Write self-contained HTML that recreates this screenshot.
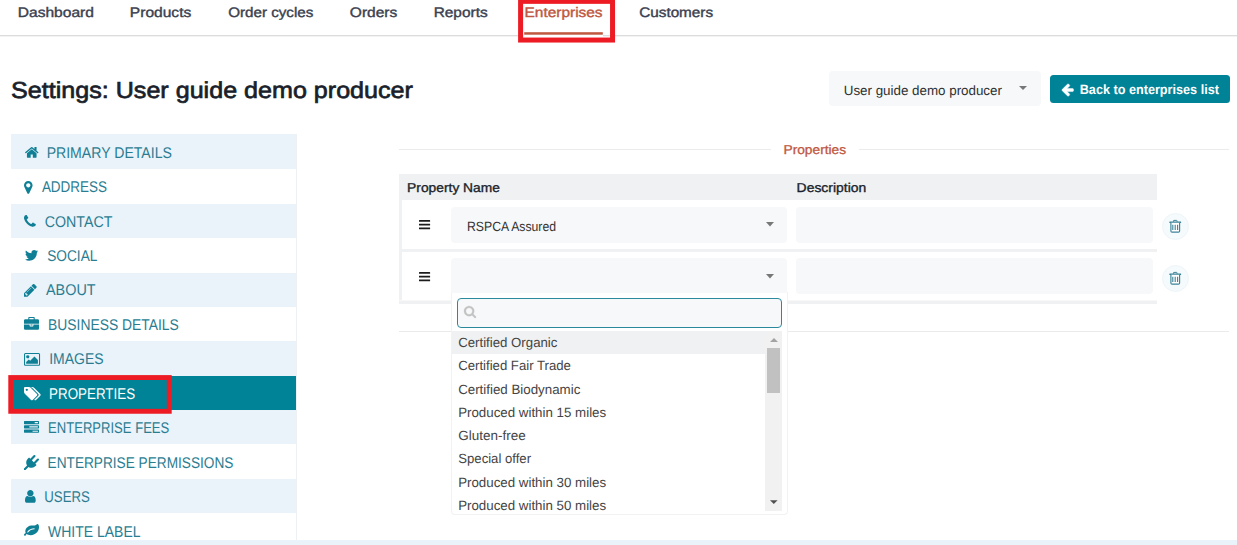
<!DOCTYPE html>
<html lang="en">
<head>
<meta charset="utf-8">
<title>Settings: User guide demo producer</title>
<style>
html,body{margin:0;padding:0;background:#fff}
body{width:1237px;height:545px;position:relative;overflow:hidden;font-family:"Liberation Sans",sans-serif}
.t{position:absolute;white-space:pre;transform-origin:0 0}
.a{position:absolute}
.mi{position:absolute;left:11px;width:285px;height:34.45px}
.odd{background:#eaf2fa}
.ic{position:absolute;overflow:visible}
.fld{position:absolute;background:#f7f8f9;border-radius:4px}
</style>
</head>
<body>
<!-- top navigation -->
<div class="a" style="left:0;top:35px;width:1237px;height:1px;background:#dcdcdc"></div>
<div class="a" style="left:0;top:36px;width:1237px;height:1px;background:#f3f3f3"></div>
<svg class="ic" style="left:520px;top:30px" width="90" height="8" viewBox="520 30 90 8"><rect x="523" y="34.7" width="80" height="2.5" fill="#fff"/><rect x="524.2" y="32.2" width="78.6" height="2.5" fill="#c0573f"/></svg>
<svg class="ic" style="left:510px;top:0" width="120" height="50" viewBox="510 0 120 50"><rect x="520.6" y="1.35" width="91.95" height="38.7" fill="none" stroke="#ed1c24" stroke-width="5"/></svg>

<!-- header controls -->
<div class="a" style="left:829px;top:71px;width:212px;height:35px;background:#f7f8f9;border-radius:4px"></div>
<svg class="ic" style="left:1019px;top:86px" width="8" height="4" viewBox="0 0 8 4"><path d="M0 0h8L4 4z" fill="#777"/></svg>
<div class="a" style="left:1050px;top:75px;width:180px;height:28px;background:#008397;border-radius:3.5px"></div>
<svg class="ic" style="left:1061.80px;top:83.76px" width="11.50" height="12.17" viewBox="192.0 181.0 1472.0 1558.0"><path d="M1664 896v128q0 53-32.500 90.500t-84.500 37.500h-704l293 294q38 36 38 90t-38 90l-75 76q-37 37-90 37-52 0-91-37l-651-652q-37-37-37-90 0-52 37-91l651-650q38-38 91-38 52 0 90 38l75 74q38 38 38 91t-38 91l-293 293h704q52 0 84.500 37.500t32.500 90.500z" fill="#ffffff" stroke="#ffffff" stroke-width="60" stroke-linejoin="round"/></svg>

<!-- side menu -->
<div id="menu">
<div class="mi odd" style="top:134px;height:35px"></div>
<div class="mi" style="top:169px;height:35px"></div>
<div class="mi odd" style="top:204px;height:34px"></div>
<div class="mi" style="top:238px;height:35px"></div>
<div class="mi odd" style="top:273px;height:34px"></div>
<div class="mi" style="top:307px;height:34px"></div>
<div class="mi odd" style="top:341px;height:35px"></div>
<div class="mi" style="top:376px;height:34px;background:#008397"></div>
<div class="mi odd" style="top:410px;height:34px"></div>
<div class="mi" style="top:444px;height:35px"></div>
<div class="mi odd" style="top:479px;height:34px"></div>
<div class="mi" style="top:513px;height:34px"></div>
<div class="a" style="left:296px;top:134px;width:1px;height:406px;background:#eef1f4"></div>
</div>
<svg class="ic" style="left:0;top:370px" width="180" height="50" viewBox="0 370 180 50"><rect x="10.75" y="377.55" width="158.5" height="33.75" fill="none" stroke="#ed1c24" stroke-width="4.9"/></svg>
<svg class="ic" style="left:24.55px;top:146.93px" width="13.50" height="10.74" viewBox="89.9 253.0 1612.2 1283.0"><path d="M1472 992v480q0 26-19 45t-45 19h-384v-384h-256v384h-384q-26 0-45-19t-19-45v-480q0-1 .5-3t.5-3l575-474 575 474q1 2 1 6zm223-69l-62 74q-8 9-21 11h-3q-13 0-21-7l-692-577-692 577q-12 8-24 7-13-2-21-11l-62-74q-8-10-7-23.500t11-21.500l719-599q32-26 76-26t76 26l244 204v-195q0-14 9-23t23-9h192q14 0 23 9t9 23v408l219 182q10 8 11 21.500t-7 23.500z" fill="#0f7f95"/></svg>
<svg class="ic" style="left:24.31px;top:180.97px" width="8.57" height="12.86" viewBox="384.0 128.0 1024.0 1536.0"><path d="M1152 640q0-106-75-181t-181-75-181 75-75 181 75 181 181 75 181-75 75-181zm256 0q0 109-33 179l-364 774q-16 33-47.500 52t-67.500 19-67.500-19-46.500-52l-365-774q-33-70-33-179 0-212 150-362t362-150 362 150 150 362z" fill="#0f7f95"/></svg>
<svg class="ic" style="left:24.46px;top:215.06px" width="11.79" height="11.79" viewBox="192.0 128.0 1408.0 1408.0"><path d="M1600 1240q0 27-10 70.500t-21 68.500q-21 50-122 106-94 51-186 51-27 0-53-3.500t-57.500-12.500-47-14.500-55.500-20.500-49-18q-98-35-175-83-127-79-264-216t-216-264q-48-77-83-175-3-9-18-49t-20.500-55.500-14.500-47-12.500-57.500-3.500-53q0-92 51-186 56-101 106-122 25-11 68.500-21t70.500-10q14 0 21 3 18 6 53 76 11 19 30 54t35 63.500 31 53.500q3 4 17.500 25t21.500 35.500 7 28.500q0 20-28.500 50t-62 55-62 53-28.500 46q0 9 5 22.500t8.500 20.500 14 24 11.500 19q76 137 174 235t235 174q2 1 19 11.500t24 14 20.500 8.500 22.500 5q18 0 46-28.500t53-62 55-62 50-28.500q14 0 28.500 7t35.500 21.500 25 17.500q25 15 53.500 31t63.500 35 54 30q70 35 76 53 3 7 3 21z" fill="#0f7f95"/></svg>
<svg class="ic" style="left:24.55px;top:249.99px" width="13.19" height="10.71" viewBox="44.0 256.0 1576.0 1280.0"><path d="M1620 408q-67 98-162 167 1 14 1 42 0 130-38 259.500t-115.500 248.500-184.500 210.500-258 146-323 54.500q-271 0-496-145 35 4 78 4 225 0 401-138-105-2-188-64.500t-114-159.500q33 5 61 5 43 0 85-11-112-23-185.500-111.500t-73.500-205.500v-4q68 38 146 41-66-44-105-115t-39-154q0-88 44-163 121 149 294.500 238.500t371.500 99.500q-8-38-8-74 0-134 94.500-228.500t228.500-94.500q140 0 236 102 109-21 205-78-37 115-142 178 93-10 186-50z" fill="#0f7f95"/></svg>
<svg class="ic" style="left:24.31px;top:284.21px" width="12.68" height="12.68" viewBox="128.0 149.0 1515.0 1515.0"><path d="M491 1536l91-91-235-235-91 91v107h128v128h107zm523-928q0-22-22-22-10 0-17 7l-542 542q-7 7-7 17 0 22 22 22 10 0 17-7l542-542q7-7 7-17zm-54-192l416 416-832 832h-416v-416zm683 96q0 53-37 90l-166 166-416-416 166-165q36-38 90-38 53 0 91 38l235 234q37 39 37 91z" fill="#0f7f95"/></svg>
<svg class="ic" style="left:24.35px;top:317.07px" width="15.00" height="12.86" viewBox="0.0 0.0 1792.0 1536.0"><path d="M640 256h512v-128h-512v128zm1152 640v480q0 66-47 113t-113 47h-1472q-66 0-113-47t-47-113v-480h672v160q0 26 19 45t45 19h320q26 0 45-19t19-45v-160h672zm-768 0v128h-256v-128h256zm768-480v384h-1792v-384q0-66 47-113t113-47h352v-160q0-40 28-68t68-28h576q40 0 68 28t28 68v160h352q66 0 113 47t47 113z" fill="#0f7f95"/></svg>
<svg class="ic" style="left:24.21px;top:352.92px" width="16.07" height="12.86" viewBox="-64.0 128.0 1920.0 1536.0"><path d="M576 576q0 80-56 136t-136 56-136-56-56-136 56-136 136-56 136 56 56 136zm1024 384v448h-1408v-192l320-320 160 160 512-512zm96-704h-1600q-13 0-22.500 9.500t-9.500 22.500v1216q0 13 9.500 22.500t22.500 9.500h1600q13 0 22.500-9.500t9.500-22.500v-1216q0-13-9.500-22.500t-22.500-9.500zm160 32v1216q0 66-47 113t-113 47h-1600q-66 0-113-47t-47-113v-1216q0-66 47-113t113-47h1600q66 0 113 47t47 113z" fill="#0f7f95"/></svg>
<svg class="ic" style="left:24.08px;top:386.71px" width="16.64" height="13.27" viewBox="-64.0 128.0 1899.0 1515.0"><path d="M384 448q0-53-37.500-90.500t-90.500-37.500-90.500 37.500-37.500 90.500 37.500 90.500 90.500 37.500 90.500-37.500 37.500-90.500zm1067 576q0 53-37 90l-491 492q-39 37-91 37-53 0-90-37l-715-716q-38-37-64.500-101t-26.500-117v-416q0-52 38-90t90-38h416q53 0 117 26.500t102 64.500l715 714q37 39 37 91zm384 0q0 53-37 90l-491 492q-39 37-91 37-36 0-59-14t-53-45l470-470q37-37 37-90 0-52-37-91l-715-714q-38-38-102-64.500t-117-26.500h224q53 0 117 26.500t102 64.500l715 714q37 39 37 91z" fill="#ffffff"/></svg>
<svg class="ic" style="left:24.30px;top:421.06px" width="15.00" height="11.79" viewBox="0.0 128.0 1792.0 1408.0"><path d="M1024 1408h640v-128h-640v128zm-384-512h1024v-128h-1024v128zm640-512h384v-128h-384v128zm512 832v256q0 26-19 45t-45 19h-1664q-26 0-45-19t-19-45v-256q0-26 19-45t45-19h1664q26 0 45 19t19 45zm0-512v256q0 26-19 45t-45 19h-1664q-26 0-45-19t-19-45v-256q0-26 19-45t45-19h1664q26 0 45 19t19 45zm0-512v256q0 26-19 45t-45 19h-1664q-26 0-45-19t-19-45v-256q0-26 19-45t45-19h1664q26 0 45 19t19 45z" fill="#0f7f95"/></svg>
<svg class="ic" style="left:24.35px;top:455.15px" width="15.00" height="15.00" viewBox="0.0 0.0 1792.0 1792.0"><path d="M1755 453q37 38 37 90.500t-37 90.500l-401 400 150 150-160 160q-163 163-389.500 186.500t-411.500-100.500l-362 362h-181v-181l362-362q-124-185-100.500-411.500t186.500-389.500l160-160 150 150 400-401q38-37 91-37t90 37 37 90.500-37 90.500l-400 401 234 234 401-400q38-37 91-37t90 37z" fill="#0f7f95"/></svg>
<svg class="ic" style="left:24.89px;top:489.92px" width="10.71" height="12.86" viewBox="256.0 128.0 1280.0 1536.0"><path d="M1536 1399q0 109-62.500 187t-150.500 78h-854q-88 0-150.500-78t-62.500-187q0-85 8.500-160.500t31.500-152 58.500-131 94-89 134.500-34.500q131 128 313 128t313-128q76 0 134.500 34.500t94 89 58.500 131 31.500 152 8.500 160.500zm-256-887q0 159-112.500 271.500t-271.500 112.500-271.500-112.500-112.500-271.500 112.500-271.500 271.500-112.500 271.500 112.500 112.500 271.500z" fill="#0f7f95"/></svg>
<svg class="ic" style="left:24.45px;top:523.91px" width="15.00" height="11.79" viewBox="0.0 128.0 1792.0 1408.0"><path d="M1280 704q0-26-19-45t-45-19q-172 0-318 49.500t-259.500 134-235.500 219.500q-19 21-19 45 0 26 19 45t45 19q24 0 45-19 27-24 74-71t67-66q137-124 268.500-176t313.500-52q26 0 45-19t19-45zm512-198q0 95-20 193-46 224-184.500 383t-357.500 268q-214 108-438 108-148 0-286-47-15-5-88-42t-96-37q-16 0-39.500 32t-45 70-52.500 70-60 32q-43 0-63.500-17.500t-45.500-59.500q-2-4-6-11t-5.500-10-3-9.500-1.500-13.500q0-35 31-73.500t68-65.500 68-56 31-48q0-4-14-38t-16-44q-9-51-9-104 0-115 43.500-220t119-184.500 170.500-139 204-95.500q55-18 145-25.500t179.500-9 178.500-6 163.500-24 113.500-56.500l29.500-29.500 29.500-28 27-20 36.500-16 43.500-4.500q39 0 70.500 46t47.500 112 24 124 8 96z" fill="#0f7f95"/></svg>

<!-- fieldset -->
<div class="a" style="left:399px;top:149px;width:830px;height:1px;background:#ebebeb"></div>
<div class="a" style="left:771px;top:140px;width:88px;height:20px;background:#fff"></div>
<div class="a" style="left:399px;top:331px;width:830px;height:1px;background:#ebebeb"></div>

<!-- table -->
<div class="a" style="left:399px;top:174px;width:758px;height:26px;background:#f0f1f2"></div>
<div class="a" style="left:399px;top:200px;width:3px;height:104px;background:#f0f1f2"></div>
<div class="a" style="left:399px;top:249px;width:758px;height:3px;background:#f0f1f2"></div>
<div class="a" style="left:399px;top:300px;width:758px;height:1px;background:#f8f8f9"></div><div class="a" style="left:399px;top:301px;width:758px;height:3px;background:#f0f1f2"></div>
<div class="fld" style="left:451px;top:207px;width:336px;height:35.5px"></div>
<div class="fld" style="left:796px;top:207px;width:357px;height:35.5px"></div>
<div class="fld" style="left:796px;top:258px;width:357px;height:35.5px"></div>
<!-- drag handles -->
<svg class="ic" style="left:419.43px;top:219.76px" width="11.14" height="9.29" viewBox="128.0 256.0 1536.0 1280.0"><path d="M1664 1344v128q0 26-19 45t-45 19h-1408q-26 0-45-19t-19-45v-128q0-26 19-45t45-19h1408q26 0 45 19t19 45zm0-512v128q0 26-19 45t-45 19h-1408q-26 0-45-19t-19-45v-128q0-26 19-45t45-19h1408q26 0 45 19t19 45zm0-512v128q0 26-19 45t-45 19h-1408q-26 0-45-19t-19-45v-128q0-26 19-45t45-19h1408q26 0 45 19t19 45z" fill="#1c1c1c"/></svg>
<svg class="ic" style="left:419.43px;top:271.76px" width="11.14" height="9.29" viewBox="128.0 256.0 1536.0 1280.0"><path d="M1664 1344v128q0 26-19 45t-45 19h-1408q-26 0-45-19t-19-45v-128q0-26 19-45t45-19h1408q26 0 45 19t19 45zm0-512v128q0 26-19 45t-45 19h-1408q-26 0-45-19t-19-45v-128q0-26 19-45t45-19h1408q26 0 45 19t19 45zm0-512v128q0 26-19 45t-45 19h-1408q-26 0-45-19t-19-45v-128q0-26 19-45t45-19h1408q26 0 45 19t19 45z" fill="#1c1c1c"/></svg>
<svg class="ic" style="left:766.3px;top:221.8px" width="8" height="4.4" viewBox="0 0 8 4.4"><path d="M0 0h8L4 4.4z" fill="#777"/></svg>
<!-- delete buttons -->
<div class="a" style="left:1162.2px;top:212.8px;width:25px;height:25px;border-radius:50%;background:#f5fafc;border:1px solid #eef5f8;box-sizing:content-box"></div>
<div class="a" style="left:1162.2px;top:264.8px;width:25px;height:25px;border-radius:50%;background:#f5fafc;border:1px solid #eef5f8;box-sizing:content-box"></div>
<svg class="ic" style="left:1165px;top:215px" width="22" height="22" viewBox="1165 215 22 22"><path d="M1173.4 221.8V221Q1173.4 220.4 1174 220.4H1176.5Q1177.1 220.4 1177.1 221V221.8" fill="none" stroke="#3d8398" stroke-width="1"/><rect x="1169.3" y="221.6" width="11.9" height="1.3" rx="0.4" fill="#3d8398"/><path d="M1170.9 222.7V231Q1170.9 232.15 1172.05 232.15H1178.45Q1179.6 232.15 1179.6 231V222.7" fill="#fff" stroke="#3d8398" stroke-width="1.15"/><path d="M1172.8 224.7v5.4M1175.2 224.7v5.4M1177.6 224.7v5.4" stroke="#3d8398" stroke-width="1.1" fill="none"/></svg>
<svg class="ic" style="left:1165px;top:267.1px" width="22" height="22" viewBox="1165 215 22 22"><path d="M1173.4 221.8V221Q1173.4 220.4 1174 220.4H1176.5Q1177.1 220.4 1177.1 221V221.8" fill="none" stroke="#3d8398" stroke-width="1"/><rect x="1169.3" y="221.6" width="11.9" height="1.3" rx="0.4" fill="#3d8398"/><path d="M1170.9 222.7V231Q1170.9 232.15 1172.05 232.15H1178.45Q1179.6 232.15 1179.6 231V222.7" fill="#fff" stroke="#3d8398" stroke-width="1.15"/><path d="M1172.8 224.7v5.4M1175.2 224.7v5.4M1177.6 224.7v5.4" stroke="#3d8398" stroke-width="1.1" fill="none"/></svg>

<!-- open select dropdown -->
<div class="a" style="left:451px;top:292px;width:334.5px;height:222px;background:#fff;border:1px solid #f2f2f2;border-top:none;border-radius:0 0 4px 4px"></div>
<div class="a" style="left:451px;top:258px;width:336px;height:35px;background:#f7f8f9;border-radius:4px 4px 0 0"></div>
<svg class="ic" style="left:766.3px;top:273.6px" width="8" height="4.4" viewBox="0 0 8 4.4"><path d="M0 0h8L4 4.4z" fill="#777"/></svg>
<div class="a" style="left:457px;top:298px;width:323px;height:28px;border:1.5px solid #2a8a9b;border-radius:4px;background:#f7f8f9"></div>
<svg class="ic" style="left:463.99px;top:305.84px" width="12.07" height="12.07" viewBox="64.0 128.0 1664.0 1664.0"><path d="M1216 832q0-185-131.500-316.500t-316.500-131.500-316.500 131.500-131.500 316.500 131.500 316.500 316.500 131.500 316.500-131.500 131.500-316.500zm512 832q0 52-38 90t-90 38q-54 0-90-38l-343-342q-179 124-399 124-143 0-273.500-55.500t-225-150-150-225-55.500-273.500 55.500-273.500 150-225 225-150 273.500-55.500 273.500 55.500 225 150 150 225 55.500 273.500q0 220-124 399l343 343q37 37 37 90z" fill="#c2c2c2" stroke="#c2c2c2" stroke-width="40"/></svg>
<div class="a" style="left:451.5px;top:331px;width:314px;height:23.4px;background:#f0f1f2"></div>
<!-- scrollbar -->
<div class="a" style="left:765px;top:331px;width:17px;height:180px;background:#f1f1f1"></div>
<div class="a" style="left:767px;top:348px;width:13px;height:45px;background:#c1c1c1"></div>
<svg class="ic" style="left:769.5px;top:338px" width="8" height="4" viewBox="0 0 8 4"><path d="M0 4h8L4 0z" fill="#a3a3a3"/></svg>
<svg class="ic" style="left:769.6px;top:499.8px" width="7.6" height="4.3" viewBox="0 0 8 4"><path d="M0 0h8L4 4z" fill="#505050"/></svg>

<!-- footer strip -->
<div class="a" style="left:0;top:540px;width:1237px;height:6px;background:#eaf2fa"></div>

<!-- text -->
<svg class="a" id="labels" style="left:0;top:0" width="1237" height="545" viewBox="0 0 1237 545" font-family="Liberation Sans, sans-serif" text-rendering="geometricPrecision">
<text id="n1" x="17.75" y="17" font-size="13.8" fill="#3b4150" textLength="76.20" lengthAdjust="spacingAndGlyphs" stroke="#3b4150" stroke-width="0.4">Dashboard</text>
<text id="n2" x="129.88" y="17" font-size="13.8" fill="#3b4150" textLength="61.37" lengthAdjust="spacingAndGlyphs" stroke="#3b4150" stroke-width="0.4">Products</text>
<text id="n3" x="228.16" y="17" font-size="13.8" fill="#3b4150" textLength="85.18" lengthAdjust="spacingAndGlyphs" stroke="#3b4150" stroke-width="0.4">Order cycles</text>
<text id="n4" x="349.85" y="17" font-size="13.8" fill="#3b4150" textLength="47.37" lengthAdjust="spacingAndGlyphs" stroke="#3b4150" stroke-width="0.4">Orders</text>
<text id="n5" x="433.67" y="17" font-size="13.8" fill="#3b4150" textLength="53.97" lengthAdjust="spacingAndGlyphs" stroke="#3b4150" stroke-width="0.4">Reports</text>
<text id="n6" x="524.57" y="17" font-size="13.8" fill="#c0573f" textLength="78.00" lengthAdjust="spacingAndGlyphs" stroke="#c0573f" stroke-width="0.4">Enterprises</text>
<text id="n7" x="639.23" y="17" font-size="13.8" fill="#3b4150" textLength="73.85" lengthAdjust="spacingAndGlyphs" stroke="#3b4150" stroke-width="0.4">Customers</text>
<text id="t1" x="11.11" y="98" font-size="23.1" fill="#1a1f2b" textLength="401.76" lengthAdjust="spacingAndGlyphs" stroke="#1a1f2b" stroke-width="0.7">Settings: User guide demo producer</text>
<text id="d1" x="843.76" y="95" font-size="13.4" fill="#2e3132" textLength="158.18" lengthAdjust="spacingAndGlyphs">User guide demo producer</text>
<text id="b1" x="1079.72" y="94" font-size="13.5" fill="#ffffff" textLength="139.19" lengthAdjust="spacingAndGlyphs" font-weight="700">Back to enterprises list</text>
<text id="lg" x="783.48" y="154" font-size="12.9" fill="#c0573f" textLength="62.67" lengthAdjust="spacingAndGlyphs" stroke="#c0573f" stroke-width="0.3">Properties</text>
<text id="h1" x="407.13" y="192" font-size="12.9" fill="#1a1f2b" textLength="92.80" lengthAdjust="spacingAndGlyphs" stroke="#1a1f2b" stroke-width="0.35">Property Name</text>
<text id="h2" x="796.62" y="192" font-size="12.9" fill="#1a1f2b" textLength="69.61" lengthAdjust="spacingAndGlyphs" stroke="#1a1f2b" stroke-width="0.35">Description</text>
<text id="r1" x="467.01" y="231" font-size="13.4" fill="#333333" textLength="89.05" lengthAdjust="spacingAndGlyphs">RSPCA Assured</text>
<text id="s0" x="46.64" y="158" font-size="15.5" fill="#2a7d91" textLength="125.28" lengthAdjust="spacingAndGlyphs">PRIMARY DETAILS</text>
<text id="s1" x="41.90" y="192" font-size="15.5" fill="#2a7d91" textLength="65.10" lengthAdjust="spacingAndGlyphs">ADDRESS</text>
<text id="s2" x="44.74" y="227" font-size="15.5" fill="#2a7d91" textLength="67.70" lengthAdjust="spacingAndGlyphs">CONTACT</text>
<text id="s3" x="47.18" y="261" font-size="15.5" fill="#2a7d91" textLength="50.20" lengthAdjust="spacingAndGlyphs">SOCIAL</text>
<text id="s4" x="45.97" y="295" font-size="15.5" fill="#2a7d91" textLength="49.62" lengthAdjust="spacingAndGlyphs">ABOUT</text>
<text id="s5" x="48.09" y="330" font-size="15.5" fill="#2a7d91" textLength="130.73" lengthAdjust="spacingAndGlyphs">BUSINESS DETAILS</text>
<text id="s6" x="49.16" y="364" font-size="15.5" fill="#2a7d91" textLength="54.37" lengthAdjust="spacingAndGlyphs">IMAGES</text>
<text id="s7" x="49.10" y="399" font-size="15.5" fill="#ffffff" textLength="85.97" lengthAdjust="spacingAndGlyphs">PROPERTIES</text>
<text id="s8" x="48.08" y="433" font-size="15.5" fill="#2a7d91" textLength="121.19" lengthAdjust="spacingAndGlyphs">ENTERPRISE FEES</text>
<text id="s9" x="47.62" y="468" font-size="15.5" fill="#2a7d91" textLength="185.80" lengthAdjust="spacingAndGlyphs">ENTERPRISE PERMISSIONS</text>
<text id="s10" x="44.29" y="502" font-size="15.5" fill="#2a7d91" textLength="45.59" lengthAdjust="spacingAndGlyphs">USERS</text>
<text id="s11" x="48.09" y="537" font-size="15.5" fill="#2a7d91" textLength="92.39" lengthAdjust="spacingAndGlyphs">WHITE LABEL</text>
<text id="l0" x="458.17" y="347" font-size="13.4" fill="#444444" textLength="99.25" lengthAdjust="spacingAndGlyphs">Certified Organic</text>
<text id="l1" x="458.17" y="370" font-size="13.4" fill="#444444" textLength="112.74" lengthAdjust="spacingAndGlyphs">Certified Fair Trade</text>
<text id="l2" x="458.15" y="394" font-size="13.4" fill="#444444" textLength="122.20" lengthAdjust="spacingAndGlyphs">Certified Biodynamic</text>
<text id="l3" x="458.13" y="417" font-size="13.4" fill="#444444" textLength="148.07" lengthAdjust="spacingAndGlyphs">Produced within 15 miles</text>
<text id="l4" x="458.29" y="440" font-size="13.4" fill="#444444" textLength="67.36" lengthAdjust="spacingAndGlyphs">Gluten-free</text>
<text id="l5" x="458.27" y="463" font-size="13.4" fill="#444444" textLength="72.78" lengthAdjust="spacingAndGlyphs">Special offer</text>
<text id="l6" x="458.14" y="487" font-size="13.4" fill="#444444" textLength="148.00" lengthAdjust="spacingAndGlyphs">Produced within 30 miles</text>
<text id="l7" x="458.14" y="510" font-size="13.4" fill="#444444" textLength="148.00" lengthAdjust="spacingAndGlyphs">Produced within 50 miles</text>
</svg>
</body>
</html>
